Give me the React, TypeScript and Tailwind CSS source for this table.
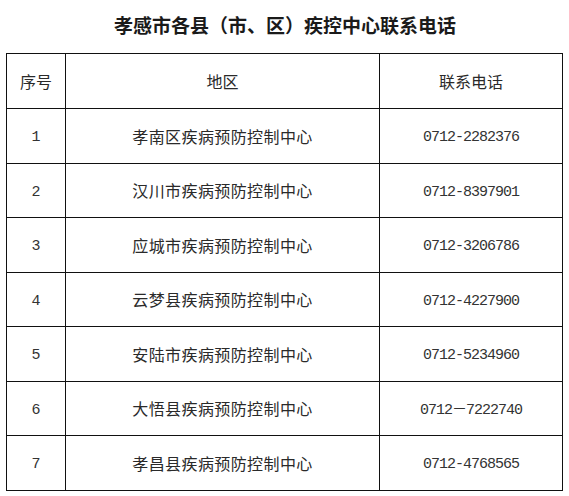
const rows = [
  { no: "1", name: "孝南区疾病预防控制中心", tel: "0712-2282376" },
  { no: "2", name: "汉川市疾病预防控制中心", tel: "0712-8397901" },
  { no: "3", name: "应城市疾病预防控制中心", tel: "0712-3206786" },
  { no: "4", name: "云梦县疾病预防控制中心", tel: "0712-4227900" },
  { no: "5", name: "安陆市疾病预防控制中心", tel: "0712-5234960" },
  { no: "6", name: "大悟县疾病预防控制中心", tel: "0712－7222740" },
  { no: "7", name: "孝昌县疾病预防控制中心", tel: "0712-4768565" },
];

const cjk = "font-['Noto_Sans_CJK_SC',sans-serif]";
const mono = "font-['Liberation_Mono','Noto_Sans_CJK_SC',monospace]";

export default function App() {
  return (
    <div className="w-[569px] h-[496px] bg-white overflow-hidden">
      <h1 className={`${cjk} pt-[11px] h-[53px] text-center text-[19px] leading-[28px] font-bold text-[#1a1a1a] pl-[1px]`}>
        孝感市各县（市、区）疾控中心联系电话
      </h1>
      <table className="ml-[6px] w-[556px] border-collapse table-fixed text-[#2a2a2a]">
        <colgroup>
          <col className="w-[59px]" />
          <col className="w-[314px]" />
          <col className="w-[183px]" />
        </colgroup>
        <thead>
          <tr className="h-[55px]">
            <th className={`${cjk} border border-[#111] font-normal text-[16px]`}>序号</th>
            <th className={`${cjk} border border-[#111] font-normal text-[16px]`}>地区</th>
            <th className={`${cjk} border border-[#111] font-normal text-[16px]`}>联系电话</th>
          </tr>
        </thead>
        <tbody>
          {rows.map((r) => (
            <tr key={r.no} className="h-[54.5px]">
              <td className={`${mono} border border-[#111] text-center text-[15px] pt-[5px] text-[#333]`}>{r.no}</td>
              <td className={`${cjk} border border-[#111] text-center text-[16px] tracking-[0.4px]`}>{r.name}</td>
              <td className={`${mono} border border-[#111] text-center text-[15px] tracking-[-1px] pt-[5px] text-[#333]`}>{r.tel}</td>
            </tr>
          ))}
        </tbody>
      </table>
    </div>
  );
}
